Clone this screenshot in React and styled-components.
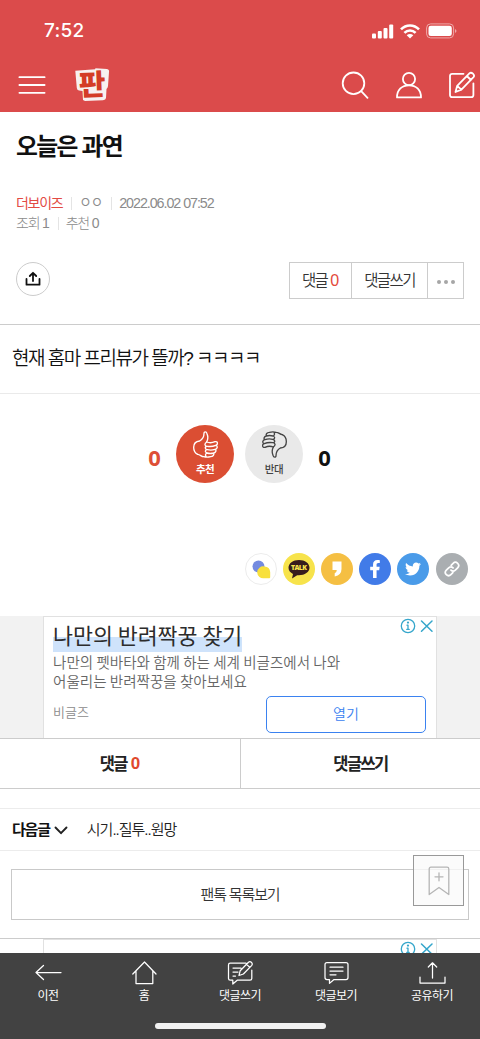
import React from "react";
import styled, { createGlobalStyle } from "styled-components";
import { FaFacebookF, FaTwitter } from "react-icons/fa";

const GlobalStyle = createGlobalStyle`
  * { box-sizing: border-box; }
  body {
    margin: 0;
    background: #fff;
    color: #222;
    font-family: "Liberation Sans", "Noto Sans CJK KR", sans-serif;
  }
  button { font: inherit; color: inherit; background: none; border: 0; padding: 0; }
  svg { display: block; flex: none; }
`;

const Screen = styled.div`
  position: relative;
  width: 480px;
  height: 1039px;
  display: flex;
  flex-direction: column;
  overflow: hidden;
  white-space: nowrap;
`;

const Label = styled.span`
  font-size: ${(p) => p.$size}px;
  line-height: ${(p) => p.$line || 20}px;
  letter-spacing: ${(p) => p.$track || 0}px;
  font-weight: ${(p) => p.$weight || 400};
  color: ${(p) => p.$color || "inherit"};
  font-family: ${(p) => (p.$cjk ? '"Noto Sans CJK KR", sans-serif' : "inherit")};
`;

const Header = styled.header`
  flex: none;
  height: 112px;
  background: #db4b4b;
  color: #fff;
`;

const StatusBar = styled.div`
  height: 60px;
  padding: 2px 23px 0 44px;
  display: flex;
  align-items: center;
  justify-content: space-between;
`;

const Time = styled.span`
  font: 550 19px/24px Inter, sans-serif;
  letter-spacing: 0.3px;
`;

const StatusIcons = styled.div`
  display: flex;
  align-items: center;
  gap: 6px;
  height: 18px;
`;

const NavBar = styled.nav`
  height: 52px;
  padding: 0 4px 2px 18px;
  display: flex;
  align-items: center;
`;

const Logo = styled.div`
  margin: 0 auto 0 29px;
`;

const NavIcons = styled.div`
  display: flex;
  align-items: center;
  gap: 26.5px;
`;

const Main = styled.main`
  flex: 1;
  min-height: 0;
  overflow: hidden;
`;

const Title = styled.h1`
  margin: 0;
  padding: 20px 16px 0;
  font-size: 23.8px;
  line-height: 30px;
  font-weight: 700;
  letter-spacing: -1.7px;
  color: #111;
`;

const Meta = styled.div`
  padding: 31px 16px 0;
`;

const MetaRow = styled.div`
  display: flex;
  align-items: center;
  height: 20px;
  color: #8b8b8b;
`;

const Pipe = styled.i`
  width: 1px;
  height: 13px;
  margin: 0 ${(p) => p.$right}px 0 ${(p) => p.$left}px;
  background: #e4e4e4;
`;

const Tools = styled.div`
  padding: 29px 16px 25px;
  height: 92px;
  display: flex;
  align-items: flex-start;
  justify-content: space-between;
  border-bottom: 1px solid #ccc;
`;

const ShareButton = styled.button`
  width: 34px;
  height: 34px;
  border: 1px solid #ccc;
  border-radius: 50%;
  display: grid;
  place-items: center;
`;

const ButtonGroup = styled.div`
  display: flex;
  height: 37px;
  border: 1px solid #ccc;
  color: #333;
`;

const GroupButton = styled.button`
  width: ${(p) => p.$w}px;
  display: flex;
  align-items: center;
  justify-content: center;
  gap: ${(p) => p.$gap || 0}px;
  & + & { border-left: 1px solid #ccc; }
`;

const Dot = styled.i`
  width: 4px;
  height: 4px;
  margin-top: 3px;
  border-radius: 50%;
  background: #a6a6a6;
`;

const Body = styled.p`
  margin: 0;
  height: 69px;
  padding: 0 12px;
  line-height: 67px;
  font-size: 19px;
  font-weight: 350;
  letter-spacing: -1.5px;
  border-bottom: 1px solid #eaeaea;
  color: #111;
`;

const Votes = styled.div`
  height: 159px;
  padding: 31px 1px 0 0;
  display: flex;
  justify-content: center;
  align-items: flex-start;
  gap: 11px;
`;

const VoteCount = styled.b`
  width: 17px;
  margin: ${(p) => p.$margin};
  text-align: center;
  font: 700 22px/30px "Noto Sans", sans-serif;
  color: ${(p) => p.$color};
`;

const VoteButton = styled.button`
  width: 58px;
  height: 58px;
  border-radius: 50%;
  background: ${(p) => p.$bg};
  color: ${(p) => p.$color};
  display: flex;
  flex-direction: column;
  align-items: center;
  gap: 2px;
  padding-top: 6px;
`;

const Shares = styled.div`
  height: 63px;
  padding-right: 12.5px;
  display: flex;
  justify-content: flex-end;
  gap: 6.1px;
`;

const ShareCircle = styled.button`
  width: 32px;
  height: 32px;
  border-radius: 50%;
  background: ${(p) => p.$bg};
  border: ${(p) => (p.$outlined ? "1px solid #ececec" : "0")};
  color: #fff;
  display: grid;
  place-items: center;
`;

const AdBand = styled.div`
  height: ${(p) => p.$height}px;
  background: ${(p) => p.$bg};
  display: flex;
  justify-content: center;
`;

const Ad = styled.article`
  width: 394px;
  padding: 0 10px 0 9px;
  border: 1px solid #e1e1e1;
  border-bottom: 0;
  background: #fff;
  overflow: hidden;
`;

const AdHead = styled.div`
  display: flex;
  justify-content: space-between;
  height: 36px;
`;

const AdTitle = styled.h2`
  margin: 0;
  height: 35px;
  font: 400 21.7px/35px "Noto Sans CJK KR", sans-serif;
  color: #2c2c2c;
  background: linear-gradient(#fff 20.5px, #cfe3fb 20.5px);
`;

const AdMarks = styled.div`
  display: flex;
  gap: 4px;
  margin: 1px -8px 0 0;
`;

const AdText = styled.p`
  height: 18.5px;
  margin: 0;
  font: 350 14.55px/18.5px "Noto Sans CJK KR", sans-serif;
  color: #666;
`;

const AdFoot = styled.div`
  display: flex;
  align-items: flex-start;
  justify-content: space-between;
  margin-top: 6px;
`;

const Advertiser = styled.span`
  margin-top: 6px;
  font: 350 13px/20px "Noto Sans CJK KR", sans-serif;
  color: #8c8c8c;
`;

const OpenButton = styled.button`
  width: 160px;
  height: 37px;
  padding-bottom: 4px;
  border: 1px solid #3b82f0;
  border-radius: 5px;
  color: #3b82f0;
`;

const Tabs = styled.div`
  display: grid;
  grid-template-columns: 1fr 1fr;
  height: 51px;
  border: solid #ccc;
  border-width: 1px 0;
  color: #222;
`;

const Tab = styled.button`
  display: flex;
  align-items: center;
  justify-content: center;
  gap: 4px;
  & + & { border-left: 1px solid #ccc; }
`;

const NextPost = styled.div`
  display: flex;
  align-items: center;
  height: 43px;
  margin-top: 19px;
  padding: 0 12px;
  border: solid #ececec;
  border-width: 1px 0;
  svg { margin: 2px 19px 0 4px; }
`;

const ListWrap = styled.div`
  height: 88px;
  padding: 18px 11px 0;
  border-bottom: 1px solid #ccc;
`;

const ListButton = styled.button`
  width: 100%;
  height: 51px;
  border: 1px solid #c9c9c9;
  color: #333;
`;

const BookmarkButton = styled.button`
  position: absolute;
  left: 413px;
  top: 855px;
  width: 51px;
  height: 51px;
  border: 1px solid #999;
  background: rgba(250, 250, 250, 0.8);
  display: grid;
  place-items: center;
`;

const BottomBar = styled.footer`
  flex: none;
  height: 86px;
  background: #424242;
  color: #fff;
  display: flex;
  flex-direction: column;
  align-items: center;
`;

const BottomTabs = styled.div`
  align-self: stretch;
  display: grid;
  grid-template-columns: repeat(5, 1fr);
  height: 70px;
`;

const BottomTab = styled.button`
  display: flex;
  flex-direction: column;
  align-items: center;
  padding-top: 5px;
`;

const HomeIndicator = styled.i`
  width: 171px;
  height: 6px;
  border-radius: 3px;
  background: #f1f1f1;
`;

const Stroke = ({ w, h, sw = 1.2, box, color = "currentColor", children }) => (
  <svg width={w} height={h} viewBox={box || `0 0 ${w} ${h}`} fill="none" stroke={color}
    strokeWidth={sw} strokeLinecap="round" strokeLinejoin="round">{children}</svg>
);

const Thumb = ({ down }) => (
  <Stroke w={25} h={27} box="0 0 75 81" sw={4}>
    <g transform={down ? "rotate(180 37.5 40.5)" : undefined}>
      <path d="M14 70C5 66 2 58 2 49C2 37 9 31 20 30C29 25 33 16 33 7C33 1 40 1 42 8C46 17 45 25 41 33" />
      <path d="M41 33Q53 38 66 32C75 30 76 41 68 43Q57 48 43 46C35 45 33 39 41 33M68 43C75 44 74 54 66 55Q55 59 43 56C35 54 35 48 41 46M66 55C71 57 69 65 62 66Q52 69 42 66C35 63 36 58 41 56M62 66C64 72 60 76 53 77Q42 80 32 77C25 77 22 71 14 70M42 66C37 68 36 74 40 77" />
    </g>
  </Stroke>
);

const AdChoice = () => (
  <AdMarks>
    <Stroke w={16} h={16} sw={1.3} color="#35a6cb">
      <circle cx="8" cy="8" r="6.7" />
      <path d="M8 7.2V11.3M7 7.2H8M6.8 11.4H9.2" />
      <circle cx="8" cy="4.6" r="0.5" fill="#35a6cb" />
    </Stroke>
    <Stroke w={14} h={16} sw={1.5} color="#35a6cb"><path d="M1.5 3L12 13.2M12 3L1.5 13.2" /></Stroke>
  </AdMarks>
);

const bottomItems = [
  { text: "이전", icon: <path d="M27 14.5H2M9.5 7.5L2 14.5L9.5 21.5" /> },
  { text: "홈", icon: <path d="M2.8 16L14.5 4L26 16M6 13V25.6H22.8V13" /> },
  {
    text: "댓글쓰기",
    icon: <path d="M20 5.2H4.2Q2.5 5.2 2.5 7V20.5Q2.5 22.2 4.2 22.2H6.8V26L11.2 22.2H24Q25.8 22.2 25.8 20.5V12M7 10H15M7 14H12M7 18H9.5M13 17.5L14.2 12.7L22.5 4.2Q24 3 25.6 4.5Q27 6 25.8 7.4L17.4 16ZM20.5 6.2L23.8 9.4" />,
  },
  {
    text: "댓글보기",
    icon: <path d="M5 4.5H24Q26 4.5 26 6.5V19.5Q26 21.5 24 21.5H12L7.5 25.4V21.5H5Q3 21.5 3 19.5V6.5Q3 4.5 5 4.5ZM8 9.2H21M8 13H21M8 16.8H14" />,
  },
  { text: "공유하기", icon: <path d="M14.5 20V5M10.3 9L14.5 4.8L18.7 9M2 19V25H27V19" /> },
];

export default function App() {
  return (
    <Screen>
      <GlobalStyle />
      <Header>
        <StatusBar>
          <Time>7:52</Time>
          <StatusIcons>
            <svg width="22" height="15" viewBox="0 0 22 15" fill="#fff">
              <rect x="0" y="9.5" width="4" height="5" rx="1" />
              <rect x="5.8" y="7" width="4" height="7.5" rx="1" />
              <rect x="11.5" y="4" width="4" height="10.5" rx="1" />
              <rect x="17.2" y="0.5" width="4" height="14" rx="1" />
            </svg>
            <svg width="20" height="15" viewBox="0 0 20 15" fill="none" stroke="#fff" strokeWidth="2.6">
              <path d="M1 5.4C6 0.2 14 0.2 19 5.4M4.4 8.9C7.6 5.7 12.4 5.7 15.6 8.9" />
              <path d="M10 14.5L6.7 11.2C8.5 9.5 11.5 9.5 13.3 11.2Z" fill="#fff" stroke="none" />
            </svg>
            <svg width="31" height="16" viewBox="0 0 31 16">
              <rect x="0.6" y="0.9" width="27" height="14" rx="4" fill="none" stroke="#efa9a9" />
              <rect x="2.5" y="2.8" width="23.3" height="10.2" rx="2.3" fill="#fff" />
              <path d="M29 6V10C31 9 31 7 29 6Z" fill="#efa9a9" />
            </svg>
          </StatusIcons>
        </StatusBar>
        <NavBar>
          <Stroke w={28} h={20} sw={1.8}><path d="M1.4 2.2H26.6M1.4 10H26.6M1.4 17.8H26.6" /></Stroke>
          <Logo>
            <svg width="35" height="34" viewBox="0 0 35 34" overflow="visible">
              <path d="M0.3 2.8L20 1.3L20.5 0.3L32 1Q34.5 1.5 34 4L33 18Q32.8 20 31.5 21L31 30Q30.8 32 28 32.3L10 33L8 32L7.5 23L4 22.5Q2 22 1.8 20Z" fill="#f7f1f0" />
              <text x="17.3" y="27" textAnchor="middle" transform="rotate(-2 17 17)" fill="#d43c26"
                fontFamily="Noto Sans CJK KR, sans-serif" fontWeight="800" fontSize="29">판</text>
            </svg>
          </Logo>
          <NavIcons>
            <Stroke w={28} h={28} sw={1.8}><circle cx="12.5" cy="12.3" r="10.8" /><path d="M20.2 20.2L26.5 26.8" /></Stroke>
            <Stroke w={26} h={28} sw={1.8}>
              <circle cx="13" cy="8" r="6.1" />
              <path d="M1 26.4H25C25 18.5 20 14.3 13 14.3S1 18.5 1 26.4Z" />
            </Stroke>
            <Stroke w={28} h={28} sw={1.8}>
              <path d="M15.5 2.8H4.2Q2 2.8 2 5V24Q2 26.2 4.2 26.2H23.2Q25.4 26.2 25.4 24V12.3M7.5 21L9.2 14.8L21.4 2.4Q23 1 24.9 2.7Q26.9 4.6 25.5 6.2L13.4 18.7ZM18.8 5L23 9M9.2 14.8L13.4 18.7" />
            </Stroke>
          </NavIcons>
        </NavBar>
      </Header>

      <Main>
        <Title>오늘은 과연</Title>
        <Meta>
          <MetaRow>
            <Label $size={14} $track={-1.3} $color="#e34a43">더보이즈</Label>
            <Pipe $left={9} $right={7} />
            <Label $size={13.5} $track={-1}>ㅇㅇ</Label>
            <Pipe $left={9} $right={7} />
            <Label $size={14.3} $track={-1.05}>2022.06.02 07:52</Label>
          </MetaRow>
          <MetaRow>
            <Label $size={14} $track={-1.2} $weight={300}>조회 1</Label>
            <Pipe $left={9} $right={7} />
            <Label $size={14} $track={-1.2} $weight={300}>추천 0</Label>
          </MetaRow>
        </Meta>
        <Tools>
          <ShareButton>
            <Stroke w={16} h={16} sw={1.8} color="#111"><path d="M8 10V2M4.8 5L8 1.8L11.2 5M1.5 8V13.7H14.5V8" /></Stroke>
          </ShareButton>
          <ButtonGroup>
            <GroupButton $w={61} $gap={3}>
              <Label $size={15.5} $track={-1.6} $weight={350}>댓글</Label>
              <Label $size={16} $color="#e34a3c">0</Label>
            </GroupButton>
            <GroupButton $w={76}><Label $size={15.5} $track={-1.6} $weight={350}>댓글쓰기</Label></GroupButton>
            <GroupButton $w={36} $gap={3}><Dot /><Dot /><Dot /></GroupButton>
          </ButtonGroup>
        </Tools>
        <Body>현재 홈마 프리뷰가 뜰까? ㅋㅋㅋㅋ</Body>
        <Votes>
          <VoteCount $color="#dd4f36" $margin="17px 2px 0 0">0</VoteCount>
          <VoteButton $bg="#db4e33" $color="#fff">
            <Thumb />
            <Label $size={10.5} $line={18} $weight={700} $track={-0.6}>추천</Label>
          </VoteButton>
          <VoteButton $bg="#e9e9e9" $color="#444">
            <Thumb down />
            <Label $size={10.5} $line={18} $weight={500} $track={-0.3}>반대</Label>
          </VoteButton>
          <VoteCount $color="#111" $margin="17px 0 0 2px">0</VoteCount>
        </Votes>
        <Shares>
          <ShareCircle $bg="#fff" $outlined>
            <svg width="20" height="20" viewBox="0 0 20 20">
              <circle cx="7.5" cy="7.5" r="6" fill="#748be0" />
              <path d="M13.5 7.5A6 6 0 1 0 13.5 19.2H18.5Q19.4 19 19.2 17.5V13A6 6 0 0 0 13.5 7.5Z" fill="#f8e03c" />
            </svg>
          </ShareCircle>
          <ShareCircle $bg="#f7e34b">
            <svg width="22" height="20" viewBox="0 0 22 20">
              <path d="M11 1C5 1 0.5 4.3 0.5 8.8C0.5 11.5 2.4 13.8 5 15L4 19.4L9.2 16.2C16 16.8 21.5 13.5 21.5 8.8C21.5 4.3 17 1 11 1Z" fill="#371c1d" />
              <text x="11" y="11.3" textAnchor="middle" fill="#f7e34b" fontFamily="Open Sans, sans-serif" fontWeight="800" fontSize="6.9" textLength="16">TALK</text>
            </svg>
          </ShareCircle>
          <ShareCircle $bg="#f5bf43">
            <svg width="10" height="16" viewBox="0 0 10 16"><path d="M0.5 0.5H9.5V8Q9.5 14 2.7 15.5V12.3Q4.8 11.3 4.8 9H0.5Z" fill="#fff" /></svg>
          </ShareCircle>
          <ShareCircle $bg="#417be8"><FaFacebookF size={18} /></ShareCircle>
          <ShareCircle $bg="#4a9be9"><FaTwitter size={16} /></ShareCircle>
          <ShareCircle $bg="#aaaeb1">
            <Stroke w={18} h={18} sw={1.7}>
              <g transform="rotate(-45 9 9)">
                <path d="M7 12.2H4.2A3.2 3.2 0 0 1 4.2 5.8H7.5A3.2 3.2 0 0 1 10.5 9M11 5.8H13.8A3.2 3.2 0 0 1 13.8 12.2H10.5A3.2 3.2 0 0 1 7.5 9" />
              </g>
            </Stroke>
          </ShareCircle>
        </Shares>
        <AdBand $bg="#f2f2f2" $height={122}>
          <Ad>
            <AdHead><AdTitle>나만의 반려짝꿍 찾기</AdTitle><AdChoice /></AdHead>
            <AdText>나만의 펫바타와 함께 하는 세계 비글즈에서 나와</AdText>
            <AdText>어울리는 반려짝꿍을 찾아보세요</AdText>
            <AdFoot>
              <Advertiser>비글즈</Advertiser>
              <OpenButton><Label $cjk $size={14} $weight={350}>열기</Label></OpenButton>
            </AdFoot>
          </Ad>
        </AdBand>
        <Tabs>
          <Tab>
            <Label $size={16.5} $track={-1.6} $weight={700}>댓글</Label>
            <Label $size={17} $weight={700} $color="#e0482e">0</Label>
          </Tab>
          <Tab><Label $size={16.5} $track={-1.6} $weight={700}>댓글쓰기</Label></Tab>
        </Tabs>
        <NextPost>
          <Label $size={15} $track={-1.2} $weight={700} $color="#111">다음글</Label>
          <Stroke w={14} h={9} sw={1.9} color="#222"><path d="M1.5 1.5L7 7.2L12.5 1.5" /></Stroke>
          <Label $size={15} $track={-1} $weight={350}>시기..질투..원망</Label>
        </NextPost>
        <ListWrap>
          <ListButton><Label $size={15} $track={-1.15} $weight={350}>팬톡 목록보기</Label></ListButton>
        </ListWrap>
        <AdBand $bg="#fff" $height={40}>
          <Ad><AdHead><span /><AdChoice /></AdHead></Ad>
        </AdBand>
      </Main>

      <BottomBar>
        <BottomTabs>
          {bottomItems.map(({ text, icon }) => (
            <BottomTab key={text}>
              <Stroke w={29} h={28} sw={1.25}>{icon}</Stroke>
              <Label $size={12} $track={-0.5}>{text}</Label>
            </BottomTab>
          ))}
        </BottomTabs>
        <HomeIndicator />
      </BottomBar>

      <BookmarkButton>
        <Stroke w={22} h={30} sw={1.3} color="#b5b5b5">
          <path d="M1.2 28.5V3Q1.2 1.2 3 1.2H19Q20.8 1.2 20.8 3V28.5L11 21.5ZM11 6.8V14.8M7 10.8H15" />
        </Stroke>
      </BookmarkButton>
    </Screen>
  );
}
